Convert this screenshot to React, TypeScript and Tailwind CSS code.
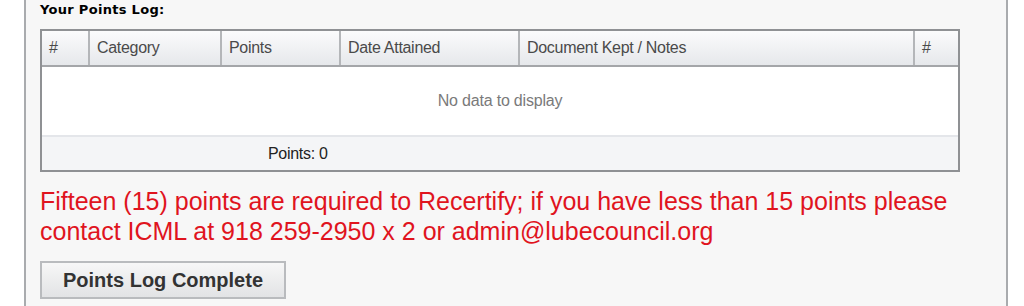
import React from "react";

const columns = [
  { label: "#", width: "w-[48px]" },
  { label: "Category", width: "w-[132px]" },
  { label: "Points", width: "w-[119px]" },
  { label: "Date Attained", width: "w-[179px]" },
  { label: "Document Kept / Notes", width: "w-[395px]" },
  { label: "#", width: "flex-1" },
];

const PointsTable = () => {
  return (
    <div className="w-[920px] border-2 border-[#8f9194] bg-white">
      <div className="flex h-[36px] border-b-2 border-[#a4a6a9] bg-gradient-to-b from-[#fbfbfc] to-[#e6e8eb]">
        {columns.map((col, i) => (
          <div
            key={i}
            className={`${col.width} ${
              i < columns.length - 1 ? "border-r-2 border-[#b4b6b9]" : ""
            } flex items-center px-[7px] text-[16px] tracking-[-0.3px] text-[#4a4a4a]`}
          >
            {col.label}
          </div>
        ))}
      </div>
      <div className="h-[70px] flex items-center justify-center text-[16px] tracking-[-0.2px] text-[#7a7a7a] border-b-2 border-[#e4e6ea]">
        No data to display
      </div>
      <div className="h-[33px] bg-[#f4f5f7] flex items-center">
        <span className="ml-[226px] text-[16px] tracking-[-0.3px] text-[#222]">Points: 0</span>
      </div>
    </div>
  );
};

export default function App() {
  return (
    <div
      className="w-[1024px] h-[306px] bg-white flex overflow-hidden"
      style={{ fontFamily: '"Liberation Sans", Arial, sans-serif' }}
    >
      <div className="ml-[24px] w-[984px] h-full border-x-2 border-[#a9abae] bg-[#f7f7f7] pl-[14px] flex flex-col">
        <h2
          className="mt-[2px] text-[13px] font-bold text-black leading-[16px] tracking-[0.3px]"
          style={{ fontFamily: '"DejaVu Sans", Verdana, sans-serif' }}
        >
          Your Points Log:
        </h2>
        <div className="mt-[11px]">
          <PointsTable />
        </div>
        <p className="mt-[14px] text-[25px] leading-[30px] text-[#e0141e]">
          Fifteen (15) points are required to Recertify; if you have less than 15 points please
          <br />
          contact ICML at 918 259-2950 x 2 or admin@lubecouncil.org
        </p>
        <div className="mt-[15px]">
          <button className="w-[246px] h-[38px] border-2 border-[#b9bbbe] bg-gradient-to-b from-[#f7f7f7] to-[#e2e3e5] text-[20px] font-bold text-[#333]">
            Points Log Complete
          </button>
        </div>
      </div>
    </div>
  );
}
